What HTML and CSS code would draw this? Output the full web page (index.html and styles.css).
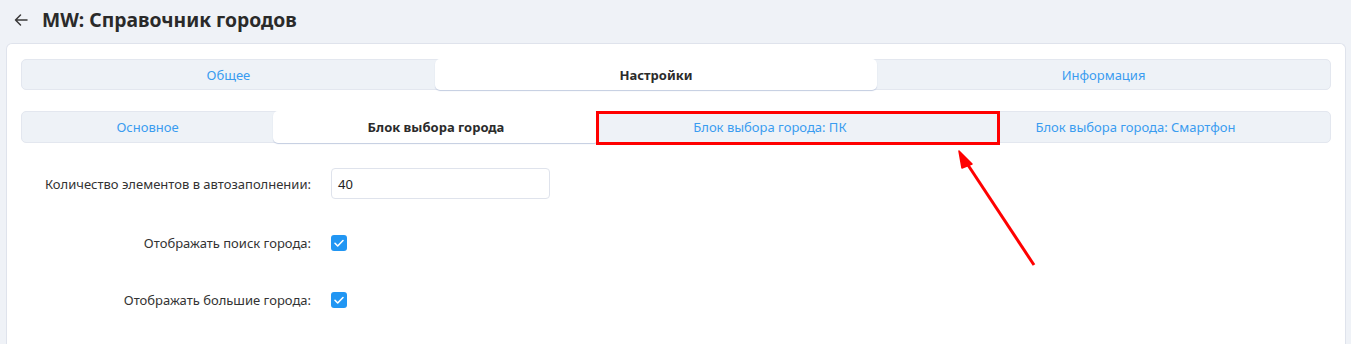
FILE: index.html
```html
<!DOCTYPE html>
<html lang="ru">
<head>
<meta charset="utf-8">
<link rel="stylesheet" href="styles.css">
</head>
<body>
<header class="page-header">
  <svg class="back" width="16" height="16" viewBox="0 0 16 16"><path d="M14 8H2.5M7.5 3L2.5 8l5 5" fill="none" stroke="#3a3a3a" stroke-width="1.5" stroke-linecap="round" stroke-linejoin="round"/></svg>
  <h1 class="title">MW: Справочник городов</h1>
</header>
<main class="card">
  <nav class="tabs tabs-main">
    <div class="tab">Общее</div>
    <div class="tab active">Настройки</div>
    <div class="tab">Информация</div>
  </nav>
  <nav class="tabs tabs-sub">
    <div class="tab">Основное</div>
    <div class="tab active">Блок выбора города</div>
    <div class="tab">Блок выбора города: ПК</div>
    <div class="tab">Блок выбора города: Смартфон</div>
  </nav>
  <form class="form">
    <div class="row">
      <label class="label">Количество элементов в автозаполнении:</label>
      <div class="input">40</div>
    </div>
    <div class="row row-check">
      <label class="label">Отображать поиск города:</label>
      <span class="check"><svg width="16" height="16" viewBox="0 0 16 16"><path d="M4 8.3l2.7 2.7L12 5.5" fill="none" stroke="#fff" stroke-width="1.6" stroke-linecap="round" stroke-linejoin="round"/></svg></span>
    </div>
    <div class="row row-check">
      <label class="label">Отображать большие города:</label>
      <span class="check"><svg width="16" height="16" viewBox="0 0 16 16"><path d="M4 8.3l2.7 2.7L12 5.5" fill="none" stroke="#fff" stroke-width="1.6" stroke-linecap="round" stroke-linejoin="round"/></svg></span>
    </div>
  </form>
</main>
<div class="mark-box"></div>
<svg class="mark-arrow" width="1351" height="344" viewBox="0 0 1351 344">
  <line x1="1034" y1="265" x2="966" y2="162" stroke="#ff0000" stroke-width="3"/>
  <path d="M959 151 L972 164 L962 168 Z" fill="#ff0000" stroke="#ff0000" stroke-width="1.5" stroke-linejoin="round"/>
</svg>
</body>
</html>
```
FILE: styles.css
```css
* { box-sizing: border-box; }
html, body { margin: 0; height: 100%; overflow: hidden; }
body {
  background: #eff2f7;
  font-family: "Noto Sans", "Open Sans", sans-serif;
  font-size: 13px;
  color: #2b2b2b;
  position: relative;
}
.page-header {
  display: flex;
  align-items: center;
  height: 43px;
  padding: 0 0 4px 13px;
}
.back { margin-right: 13px; }
.title {
  margin: 0;
  font-size: 19.3px;
  font-weight: 700;
  color: #2a2a2a;
}
.card {
  margin: 0 5px 0 6px;
  background: #fff;
  border: 1px solid #dfe3ec;
  border-bottom: 0;
  border-radius: 6px 6px 0 0;
  padding: 15px 14px 0;
  height: 301px;
}
.tabs {
  display: flex;
  background: #eef2f7;
  border: 1px solid #e3e7ef;
  border-radius: 5px;
  height: 31px;
}
.tabs-sub { margin-top: 21px; height: 32px; }
.tab {
  flex: 1 1 auto;
  display: flex;
  align-items: center;
  justify-content: center;
  color: #3a9cf0;
  font-size: 13px;
  white-space: nowrap;
}
.tab.active {
  background: #fff;
  color: #2b2b2b;
  font-weight: 700;
  border-radius: 5px;
  box-shadow: 0 1px 1px #c3cce0;
  margin: -1px 0;
}
.form { margin-top: 25px; }
.row {
  display: flex;
  align-items: center;
  height: 31px;
  margin-bottom: 30px;
}
.row-check { height: 27px; }
.label {
  flex: 0 0 290px;
  width: 290px;
  text-align: right;
  margin-right: 20px;
  color: #333;
  white-space: nowrap;
  font-size: 13px;
}
.input {
  width: 219px;
  height: 31px;
  border: 1px solid #dfe3ec;
  border-radius: 4px;
  padding: 0 6px;
  display: flex;
  align-items: center;
  color: #222;
}
.check {
  width: 16px;
  height: 16px;
  border-radius: 3px;
  background: #2196f3;
  display: block;
}
.check svg { display: block; }
.mark-box {
  position: absolute;
  left: 596px;
  top: 111px;
  width: 404px;
  height: 34px;
  border: 3px solid #ff0000;
}
.mark-arrow {
  position: absolute;
  left: 0;
  top: 0;
  pointer-events: none;
}
```
